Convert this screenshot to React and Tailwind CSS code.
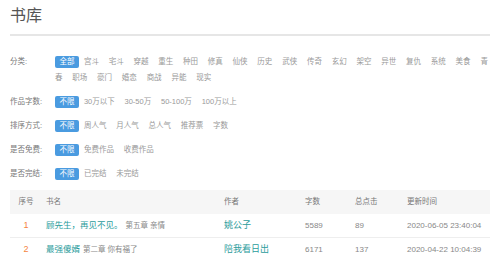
import React from 'react';

const filters = [
  {
    label: '分类:',
    items: ['全部', '宫斗', '宅斗', '穿越', '重生', '种田', '修真', '仙侠', '历史', '武侠', '传奇', '玄幻', '架空', '异世', '复仇', '系统', '美食', '青春', '职场', '豪门', '婚恋', '商战', '异能', '现实'],
  },
  { label: '作品字数:', items: ['不限', '30万以下', '30-50万', '50-100万', '100万以上'] },
  { label: '排序方式:', items: ['不限', '周人气', '月人气', '总人气', '推荐票', '字数'] },
  { label: '是否免费:', items: ['不限', '免费作品', '收费作品'] },
  { label: '是否完结:', items: ['不限', '已完结', '未完结'] },
];

const books = [
  { no: 1, name: '顾先生，再见不见。', chapter: '第五章 亲情', author: '姚公子', words: 5589, clicks: 89, time: '2020-06-05 23:40:04' },
  { no: 2, name: '最强傻婿', chapter: '第二章 你有福了', author: '陪我看日出', words: 6171, clicks: 137, time: '2020-04-22 10:04:39' },
];

function Item({ text }) {
  // 青春 breaks across the line in the original, so each character gets its own span
  if (text === '青春') {
    return (
      <>
        <span className="ml-[4.9px]">青</span>
        <span className="mr-[4.9px]">春</span>
      </>
    );
  }
  return <span className="mx-[4.9px]">{text}</span>;
}

export default function App() {
  return (
    <div className="w-[500px] h-[255px] overflow-hidden bg-white px-[10px] font-['Liberation_Sans','Noto_Sans_CJK_SC',sans-serif]">
      <h1 className="pt-[5px] pb-[7px] text-[16px] leading-[22px] text-[#555] border-b-2 border-[#e6e6e6]">书库</h1>

      <div className="pt-[18px]">
        {filters.map((f) => (
          <div key={f.label} className="flex mb-[8px]">
            <div className="w-[45px] shrink-0 text-[7.5px] leading-[16px] text-[#777]">{f.label}</div>
            <div className="w-[438px] text-[7.5px] leading-[16px] text-[#999]">
              {f.items.map((item, i) =>
                i === 0 ? (
                  <span key={item} className="inline-block px-[4.5px] leading-[12px] rounded-[2px] bg-[#4a9be0] text-white">{item}</span>
                ) : (
                  <Item key={item} text={item} />
                )
              )}
            </div>
          </div>
        ))}
      </div>

      <div className="mt-[5px]">
        <div className="grid grid-cols-[36px_178px_81px_50px_52px_1fr] h-[24px] items-center bg-[#f6f6f6] text-[7.5px] text-[#777]">
          <div className="text-center pr-[4px]">序号</div>
          <div>书名</div>
          <div>作者</div>
          <div>字数</div>
          <div>总点击</div>
          <div>更新时间</div>
        </div>
        {books.map((b) => (
          <div key={b.no} className="grid grid-cols-[36px_178px_81px_50px_52px_1fr] h-[24px] items-center border-b border-[#eee] text-[8px] text-[#888]">
            <div className="text-center pr-[4px] text-[9px] text-[#f5843f]">{b.no}</div>
            <div className="whitespace-nowrap">
              <span className="text-[8.5px] text-[#2b9c9c]">{b.name}</span>
              <span className="ml-[3px] text-[7.5px] text-[#888]">{b.chapter}</span>
            </div>
            <div className="text-[9px] text-[#2b9c9c]">{b.author}</div>
            <div>{b.words}</div>
            <div>{b.clicks}</div>
            <div>{b.time}</div>
          </div>
        ))}
      </div>
    </div>
  );
}
